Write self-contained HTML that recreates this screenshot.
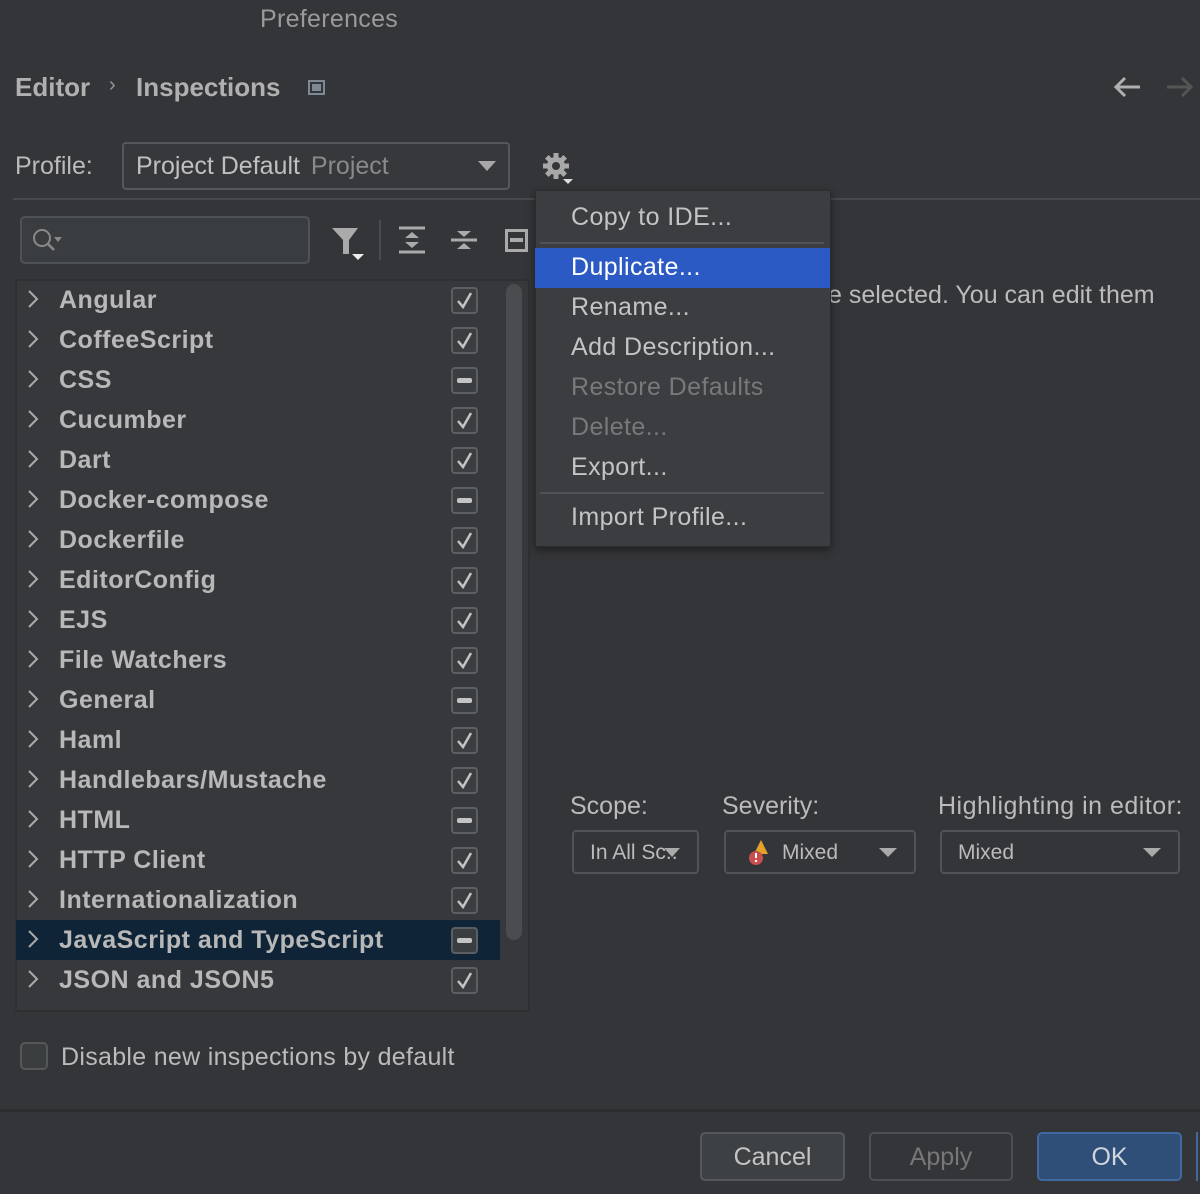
<!DOCTYPE html>
<html><head><meta charset="utf-8"><style>
*{box-sizing:border-box;margin:0;padding:0}
body{width:1200px;height:1194px;background:#343538;font-family:"Liberation Sans",sans-serif;color:#bbbbbb;position:relative;overflow:hidden}
.a{position:absolute;white-space:nowrap}
.row{position:absolute;left:16px;width:484px;height:40px}
.row .chev{position:absolute;left:10px;top:8px}
.row .t{position:absolute;left:43px;top:6px;font-weight:bold;font-size:25px;color:#b8b8b8;letter-spacing:0.5px}
.cb{position:absolute;left:435px;top:7px;width:27px;height:27px;border:2px solid #5c5f62;border-radius:4px;background:#3b3e40}
.mi{position:absolute;left:571px;font-size:25px;color:#c4c4c4;letter-spacing:0.4px}
</style></head><body>
<div class="a" style="left:260px;top:5px;font-size:25px;color:#9a9a9a;letter-spacing:0.3px">Preferences</div>
<div class="a" style="left:15px;top:72px;font-size:26px;font-weight:bold;color:#b0b0b0">Editor</div>
<div class="a" style="left:109px;top:74px;font-size:20px;color:#999">›</div>
<div class="a" style="left:136px;top:72px;font-size:26px;font-weight:bold;color:#b0b0b0">Inspections</div>
<div class="a" style="left:308px;top:80px;width:17px;height:15px;border:2px solid #7d8a95"><div style="margin:2px;height:7px;background:#7d8a95"></div></div>
<svg class="a" style="left:1112px;top:74px" width="30" height="26"><path d="M4 13H28M13 4L4 13L13 22" stroke="#b0b0b0" stroke-width="3" fill="none"/></svg>
<svg class="a" style="left:1165px;top:74px" width="35" height="26"><path d="M2 13H26M17 4L26 13L17 22" stroke="#555" stroke-width="3" fill="none"/></svg>

<div class="a" style="left:15px;top:152px;font-size:25px;color:#bbb">Profile:</div>
<div class="a" style="left:122px;top:142px;width:388px;height:48px;border:2px solid #55585b;border-radius:4px;background:#36383b"></div>
<div class="a" style="left:136px;top:152px;font-size:25px;color:#c0c0c0">Project Default <span style="color:#8a8a8a;margin-left:4px">Project</span></div>
<div class="a" style="left:478px;top:161px;width:0;height:0;border-left:9px solid transparent;border-right:9px solid transparent;border-top:10px solid #a8a8a8"></div>
<svg class="a" style="left:542px;top:152px" width="30" height="30"><g fill="#a8a8a8"><circle cx="14" cy="14" r="9"/><g stroke="#a8a8a8" stroke-width="5"><path d="M14 1v26M1 14h26M4.8 4.8l18.4 18.4M23.2 4.8L4.8 23.2"/></g></g><circle cx="14" cy="14" r="4" fill="#343538"/></svg>
<div class="a" style="left:563px;top:179px;border-left:5px solid transparent;border-right:5px solid transparent;border-top:5px solid #ddd"></div>
<div class="a" style="left:13px;top:198px;width:1187px;height:2px;background:#46494c"></div>

<div class="a" style="left:20px;top:216px;width:290px;height:48px;border:2px solid #4f5254;border-radius:5px;background:#3a3d3f"></div>
<svg class="a" style="left:30px;top:226px" width="36" height="30"><circle cx="12" cy="12" r="8" stroke="#888" stroke-width="2" fill="none"/><path d="M18 18L24 24" stroke="#888" stroke-width="2.5"/><path d="M24 11h8l-4 5z" fill="#888"/></svg>
<svg class="a" style="left:330px;top:224px" width="40" height="38"><path d="M2 4H28L19 16V30H13V16Z" fill="#aaa"/><path d="M22 30h12l-6 6z" fill="#eee"/></svg>
<div class="a" style="left:379px;top:220px;width:2px;height:40px;background:#4a4d50"></div>
<svg class="a" style="left:398px;top:226px" width="30" height="30"><path d="M1 2H27M1 26H27" stroke="#aaa" stroke-width="3"/><path d="M14 6l7 6H7zM14 22l7-6H7z" fill="#aaa"/></svg>
<svg class="a" style="left:450px;top:226px" width="30" height="30"><path d="M1 14H27" stroke="#aaa" stroke-width="3"/><path d="M14 11l7-6H7zM14 17l7 6H7z" fill="#aaa"/></svg>
<div class="a" style="left:505px;top:229px;width:23px;height:23px;border:3px solid #aaa"><div style="margin:6px 2px;height:4px;background:#aaa"></div></div>

<div class="a" style="left:15px;top:279px;width:515px;height:733px;border:2px solid #2e3032;background:#36383b"></div>
<div class="a" style="left:506px;top:284px;width:16px;height:656px;border-radius:8px;background:#4a4c4f"></div>
<div class="row" style="top:920px;background:#0f2537"></div>

<div id="list"></div>
<script>
var items=[["Angular",1],["CoffeeScript",1],["CSS",0],["Cucumber",1],["Dart",1],["Docker-compose",0],["Dockerfile",1],["EditorConfig",1],["EJS",1],["File Watchers",1],["General",0],["Haml",1],["Handlebars/Mustache",1],["HTML",0],["HTTP Client",1],["Internationalization",1],["JavaScript and TypeScript",0],["JSON and JSON5",1]];
var h="";
items.forEach(function(it,i){
var y=280+i*40;
var mark=it[1]?'<svg width="23" height="23" style="position:absolute;left:0;top:0"><path d="M5 12l5 6L18 4" stroke="#c4c4c4" stroke-width="2.5" fill="none"/></svg>':'<div style="margin:9px 4px;height:5px;border-radius:2px;background:#c4c4c4"></div>';
h+='<div class="row" style="top:'+y+'px"><svg class="chev" width="14" height="22"><path d="M3 3l8 8-8 8" stroke="#aaa" stroke-width="2" fill="none"/></svg><div class="t">'+it[0]+'</div><div class="cb">'+mark+'</div></div>';
});
document.getElementById("list").innerHTML=h;
</script>

<div class="a" style="left:828px;top:281px;font-size:25px;color:#bbb">e selected. You can edit them</div>

<div class="a" style="left:535px;top:190px;width:296px;height:357px;background:#3b3d40;border:1px solid #2b2c2e;box-shadow:0 3px 8px rgba(0,0,0,.4)"></div>
<div class="mi" style="top:203px">Copy to IDE...</div>
<div class="a" style="left:540px;top:242px;width:284px;height:2px;background:#505356"></div>
<div class="a" style="left:535px;top:248px;width:295px;height:40px;background:#2c5ac4"></div>
<div class="mi" style="top:253px;color:#fff">Duplicate...</div>
<div class="mi" style="top:293px">Rename...</div>
<div class="mi" style="top:333px">Add Description...</div>
<div class="mi" style="top:373px;color:#77797b">Restore Defaults</div>
<div class="mi" style="top:413px;color:#77797b">Delete...</div>
<div class="mi" style="top:453px">Export...</div>
<div class="a" style="left:540px;top:492px;width:284px;height:2px;background:#505356"></div>
<div class="mi" style="top:503px">Import Profile...</div>

<div class="a" style="left:570px;top:792px;font-size:25px;color:#bbb">Scope:</div>
<div class="a" style="left:722px;top:792px;font-size:25px;color:#bbb">Severity:</div>
<div class="a" style="left:938px;top:792px;font-size:25px;color:#bbb;letter-spacing:0.5px">Highlighting in editor:</div>
<div class="a" style="left:572px;top:830px;width:127px;height:44px;border:2px solid #505356;border-radius:4px"></div>
<div class="a" style="left:590px;top:841px;font-size:21px;color:#bbb">In All Sc..</div>
<div class="a" style="left:664px;top:848px;border-left:8px solid transparent;border-right:8px solid transparent;border-top:9px solid #aaa"></div>
<div class="a" style="left:724px;top:830px;width:192px;height:44px;border:2px solid #505356;border-radius:4px"></div>
<svg class="a" style="left:746px;top:838px" width="30" height="30"><path d="M15 2L22 16H8Z" fill="#e5a229"/><circle cx="10" cy="20" r="7" fill="#c94f4f"/><path d="M10 15v5" stroke="#fff" stroke-width="2"/><circle cx="10" cy="23" r="1.2" fill="#fff"/></svg>
<div class="a" style="left:782px;top:841px;font-size:21px;color:#bbb">Mixed</div>
<div class="a" style="left:879px;top:848px;border-left:9px solid transparent;border-right:9px solid transparent;border-top:9px solid #aaa"></div>
<div class="a" style="left:940px;top:830px;width:240px;height:44px;border:2px solid #505356;border-radius:4px"></div>
<div class="a" style="left:958px;top:841px;font-size:21px;color:#bbb">Mixed</div>
<div class="a" style="left:1143px;top:848px;border-left:9px solid transparent;border-right:9px solid transparent;border-top:9px solid #aaa"></div>

<div class="a" style="left:20px;top:1042px;width:28px;height:28px;border:2px solid #55585b;border-radius:5px;background:#3a3e3f"></div>
<div class="a" style="left:61px;top:1043px;font-size:25px;color:#bbb;letter-spacing:0.3px">Disable new inspections by default</div>

<div class="a" style="left:0;top:1109px;width:1200px;height:3px;background:#2c2d2f"></div>
<div class="a" style="left:700px;top:1132px;width:145px;height:49px;border:2px solid #55585b;border-radius:5px;background:#3e4144"></div>
<div class="a" style="left:700px;top:1143px;width:145px;text-align:center;font-size:25px;color:#c4c4c4">Cancel</div>
<div class="a" style="left:869px;top:1132px;width:144px;height:49px;border:2px solid #4d5053;border-radius:5px"></div>
<div class="a" style="left:869px;top:1143px;width:144px;text-align:center;font-size:25px;color:#777">Apply</div>
<div class="a" style="left:1037px;top:1132px;width:145px;height:49px;border:2px solid #3e6aa0;border-radius:5px;background:#2f4f78"></div>
<div class="a" style="left:1037px;top:1143px;width:145px;text-align:center;font-size:25px;color:#d0d6de">OK</div>
<div class="a" style="left:1196px;top:1132px;width:2px;height:49px;background:#3e6aa0"></div>
</body></html>
